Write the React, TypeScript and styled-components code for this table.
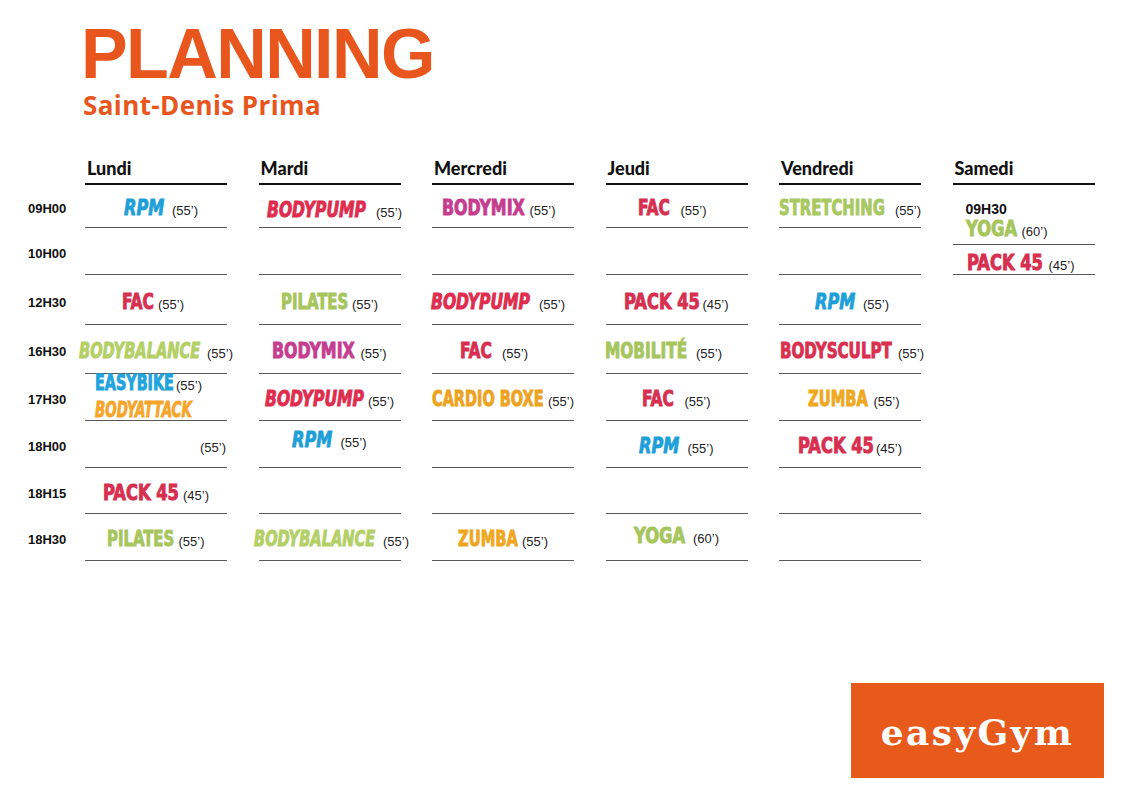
import React, { useLayoutEffect, useRef, useState } from "react";
import styled, { createGlobalStyle } from "styled-components";

const GlobalStyle = createGlobalStyle`
  html, body { margin: 0; padding: 0; background: #ffffff; }
  body { font-family: "Liberation Sans", Arial, sans-serif; }
`;

const ORANGE = "#E8561E";

/* w = drawn width of the class name in the printed planning */
type ClassDef = { name: string; color: string; w: number; italic?: boolean };

const RPM: ClassDef = { name: "RPM", color: "#1E9FD9", w: 40, italic: true };
const BODYPUMP: ClassDef = { name: "BODYPUMP", color: "#DE2D4E", w: 99, italic: true };
const BODYMIX: ClassDef = { name: "BODYMIX", color: "#C53D8E", w: 83 };
const PILATES: ClassDef = { name: "PILATES", color: "#A6C55C", w: 67 };
const FAC: ClassDef = { name: "FAC", color: "#D62F50", w: 32 };
const BODYBALANCE: ClassDef = { name: "BODYBALANCE", color: "#B3CF66", w: 121, italic: true };
const EASYBIKE: ClassDef = { name: "EASYBIKE", color: "#21A4DE", w: 79 };
const BODYATTACK: ClassDef = { name: "BODYATTACK", color: "#F4A52A", w: 97, italic: true };
const PACK45: ClassDef = { name: "PACK 45", color: "#D62F50", w: 76 };
const CARDIOBOXE: ClassDef = { name: "CARDIO BOXE", color: "#EDA321", w: 112 };
const ZUMBA: ClassDef = { name: "ZUMBA", color: "#EFA71F", w: 60 };
const YOGA: ClassDef = { name: "YOGA", color: "#A6C55C", w: 51 };
const STRETCHING: ClassDef = { name: "STRETCHING", color: "#A8C862", w: 106 };
const MOBILITE: ClassDef = { name: "MOBILITÉ", color: "#A6C55C", w: 82 };
const BODYSCULPT: ClassDef = { name: "BODYSCULPT", color: "#D9304F", w: 112 };

type Line = { cls?: ClassDef; dur?: string; gap?: number; time?: string };
type Cell = {
  h?: number;
  lines: Line[];
  x?: "flex-start" | "center" | "flex-end";
  y?: "flex-start" | "center" | "flex-end";
  pad?: string;
  dx?: number;
};

const D55 = "(55’)";
const D45 = "(45’)";
const D60 = "(60’)";

const e = (cls: ClassDef, dur = D55, gap = 6): Line => ({ cls, dur, gap });
const empty: Cell = { lines: [] };
const one = (l: Line, dx = 0): Cell => ({ lines: [l], dx });

const ROW_HEIGHTS = [43, 47, 50, 49, 47, 47, 46, 47];
const TIMES = ["09H00", "10H00", "12H30", "16H30", "17H30", "18H00", "18H15", "18H30"];

const DAYS: { name: string; cells: Cell[] }[] = [
  {
    name: "Lundi",
    cells: [
      one(e(RPM, D55, 8), 5),
      empty,
      one(e(FAC, D55, 4), -3),
      one(e(BODYBALANCE, D55, 7)),
      {
        lines: [e(EASYBIKE, D55, 2), { cls: BODYATTACK }],
        x: "flex-start",
        pad: "0 0 0 10px",
      },
      { lines: [{ dur: D55 }], x: "flex-end", y: "flex-end", pad: "0 1px 7px 0" },
      one(e(PACK45, D45, 4)),
      one(e(PILATES, D55, 4)),
    ],
  },
  {
    name: "Mardi",
    cells: [
      { lines: [e(BODYPUMP, D55, 10)], pad: "10px 0 0 10px" },
      empty,
      one(e(PILATES, D55, 4)),
      one(e(BODYMIX, D55, 5)),
      one(e(BODYPUMP, D55, 4)),
      { lines: [e(RPM, D55, 8)], y: "flex-start", pad: "7px 0 0 0" },
      empty,
      one(e(BODYBALANCE, D55, 8), 2),
    ],
  },
  {
    name: "Mercredi",
    cells: [
      one(e(BODYMIX, D55, 4), -4),
      empty,
      one(e(BODYPUMP, D55, 9), -5),
      one(e(FAC, D55, 10), -9),
      one(e(CARDIOBOXE, D55, 4)),
      empty,
      empty,
      { lines: [e(ZUMBA, D55, 4)], pad: "6px 0 0 0" },
    ],
  },
  {
    name: "Jeudi",
    cells: [
      one(e(FAC, D55, 10), -4),
      empty,
      one(e(PACK45, D45, 2)),
      one(e(MOBILITE, D55, 9), -13),
      one(e(FAC, D55, 10)),
      one(e(RPM, D55, 8)),
      empty,
      { lines: [e(YOGA, D60, 8)], pad: "0" },
    ],
  },
  {
    name: "Vendredi",
    cells: [
      one(e(STRETCHING, D55, 10)),
      empty,
      one(e(RPM, D55, 8), 2),
      one(e(BODYSCULPT, D55, 6), 2),
      one(e(ZUMBA, D55, 5), 4),
      one(e(PACK45, D45, 2)),
      empty,
      empty,
    ],
  },
  {
    name: "Samedi",
    cells: [
      {
        h: 60,
        lines: [{ time: "09H30" }, e(YOGA, D60, 5)],
        x: "flex-start",
        y: "flex-end",
        pad: "0 0 0 13px",
      },
      { h: 30, lines: [e(PACK45, D45, 6)], x: "flex-start", pad: "9px 0 0 14px" },
    ],
  },
];

function cellPadding(c: Cell): string {
  if (c.pad) return c.pad;
  const dx = c.dx ?? 0;
  const left = dx > 0 ? dx * 2 : 0;
  const right = dx < 0 ? -dx * 2 : 0;
  return `7px ${right}px 0 ${left}px`;
}

const Page = styled.div`
  width: 1131px;
  height: 800px;
  box-sizing: border-box;
  padding: 19px 27px 22px 0;
  display: flex;
  flex-direction: column;
  overflow: hidden;
`;

const Header = styled.header`
  padding-left: 81px;
  display: flex;
  flex-direction: column;
`;

const Title = styled.h1`
  margin: 0;
  font-family: "Liberation Sans", Arial, sans-serif;
  font-weight: 700;
  font-size: 70px;
  line-height: 70px;
  letter-spacing: -1.6px;
  color: ${ORANGE};
`;

const Subtitle = styled.div`
  margin-top: 4px;
  padding-left: 2px;
  font-family: "Open Sans", Lato, sans-serif;
  font-weight: 700;
  font-size: 26px;
  line-height: 25px;
  letter-spacing: 0.4px;
  color: ${ORANGE};
`;

const Schedule = styled.section`
  margin-top: 37px;
  padding-left: 28px;
  display: flex;
`;

const TimeColumn = styled.div`
  width: 57px;
  display: flex;
  flex-direction: column;
`;

const HeaderSpacer = styled.div`
  height: 30px;
`;

const TimeCell = styled.div<{ $h: number }>`
  height: ${(p) => p.$h}px;
  box-sizing: border-box;
  padding-top: 4px;
  display: flex;
  align-items: center;
  font-family: "Liberation Sans", Arial, sans-serif;
  font-weight: 700;
  font-size: 13px;
  color: #111;
`;

const Days = styled.div`
  display: flex;
  gap: 31.5px;
`;

const DayColumn = styled.div`
  width: 142px;
  display: flex;
  flex-direction: column;
`;

const DayHeader = styled.div`
  height: 30px;
  box-sizing: border-box;
  border-bottom: 2px solid #111;
  padding: 0 0 5px 2px;
  display: flex;
  align-items: flex-end;
  font-family: Lato, "Open Sans", sans-serif;
  font-weight: 900;
  font-size: 18px;
  line-height: 20px;
  color: #111;
`;

const Slot = styled.div<{ $h: number; $x: string; $y: string; $pad: string }>`
  height: ${(p) => p.$h}px;
  box-sizing: border-box;
  border-bottom: 1.5px solid #5a5a5a;
  padding: ${(p) => p.$pad};
  display: flex;
  flex-direction: column;
  justify-content: ${(p) => p.$y};
  align-items: ${(p) => p.$x};
`;

const Entry = styled.div<{ $gap: number }>`
  display: flex;
  align-items: baseline;
  gap: ${(p) => p.$gap}px;
  white-space: nowrap;
  line-height: 24px;
`;

const NameBox = styled.span`
  display: inline-block;
  white-space: nowrap;
  overflow: visible;
`;

const NameInner = styled.span<{ $color: string; $italic?: boolean }>`
  display: inline-block;
  transform-origin: left center;
  font-family: "DejaVu Sans Condensed", "DejaVu Sans", sans-serif;
  font-weight: 700;
  font-size: 21px;
  line-height: 24px;
  font-style: ${(p) => (p.$italic ? "italic" : "normal")};
  color: ${(p) => p.$color};
  -webkit-text-stroke: 0.9px ${(p) => p.$color};
`;

const Duration = styled.span`
  font-family: "Liberation Sans", Arial, sans-serif;
  font-size: 13px;
  color: #222;
`;

const SlotTime = styled.span`
  font-family: "Liberation Sans", Arial, sans-serif;
  font-weight: 700;
  font-size: 14px;
  line-height: 16px;
  color: #111;
`;

const Footer = styled.footer`
  margin-top: auto;
  display: flex;
  justify-content: flex-end;
`;

const Logo = styled.div`
  width: 253px;
  height: 95px;
  box-sizing: border-box;
  padding-top: 3px;
  background: #e85a1c;
  display: flex;
  align-items: center;
  justify-content: center;
  font-family: "DejaVu Serif", "Liberation Serif", serif;
  font-weight: 700;
  font-size: 36px;
  letter-spacing: 2.3px;
  color: #ffffff;
`;

function ClassLabel({ cls }: { cls: ClassDef }) {
  const ref = useRef<HTMLSpanElement>(null);
  const [k, setK] = useState(0.8);
  useLayoutEffect(() => {
    const w = ref.current?.offsetWidth ?? 0;
    if (w > 0) setK(cls.w / w);
  }, [cls.w]);
  return (
    <NameBox style={{ width: cls.w }}>
      <NameInner
        ref={ref}
        $color={cls.color}
        $italic={cls.italic}
        style={{ transform: `scaleX(${k})` }}
      >
        {cls.name}
      </NameInner>
    </NameBox>
  );
}

function renderLine(l: Line, i: number) {
  if (l.time) return <SlotTime key={i}>{l.time}</SlotTime>;
  return (
    <Entry key={i} $gap={l.gap ?? 6}>
      {l.cls && <ClassLabel cls={l.cls} />}
      {l.dur && <Duration>{l.dur}</Duration>}
    </Entry>
  );
}

export default function App() {
  return (
    <>
      <GlobalStyle />
      <Page>
        <Header>
          <Title>PLANNING</Title>
          <Subtitle>Saint-Denis Prima</Subtitle>
        </Header>
        <Schedule>
          <TimeColumn>
            <HeaderSpacer />
            {TIMES.map((t, i) => (
              <TimeCell key={t} $h={ROW_HEIGHTS[i]}>
                {t}
              </TimeCell>
            ))}
          </TimeColumn>
          <Days>
            {DAYS.map((day) => (
              <DayColumn key={day.name}>
                <DayHeader>{day.name}</DayHeader>
                {day.cells.map((c, i) => (
                  <Slot
                    key={i}
                    $h={c.h ?? ROW_HEIGHTS[i]}
                    $x={c.x ?? "center"}
                    $y={c.y ?? "center"}
                    $pad={cellPadding(c)}
                  >
                    {c.lines.map(renderLine)}
                  </Slot>
                ))}
              </DayColumn>
            ))}
          </Days>
        </Schedule>
        <Footer>
          <Logo>easyGym</Logo>
        </Footer>
      </Page>
    </>
  );
}
